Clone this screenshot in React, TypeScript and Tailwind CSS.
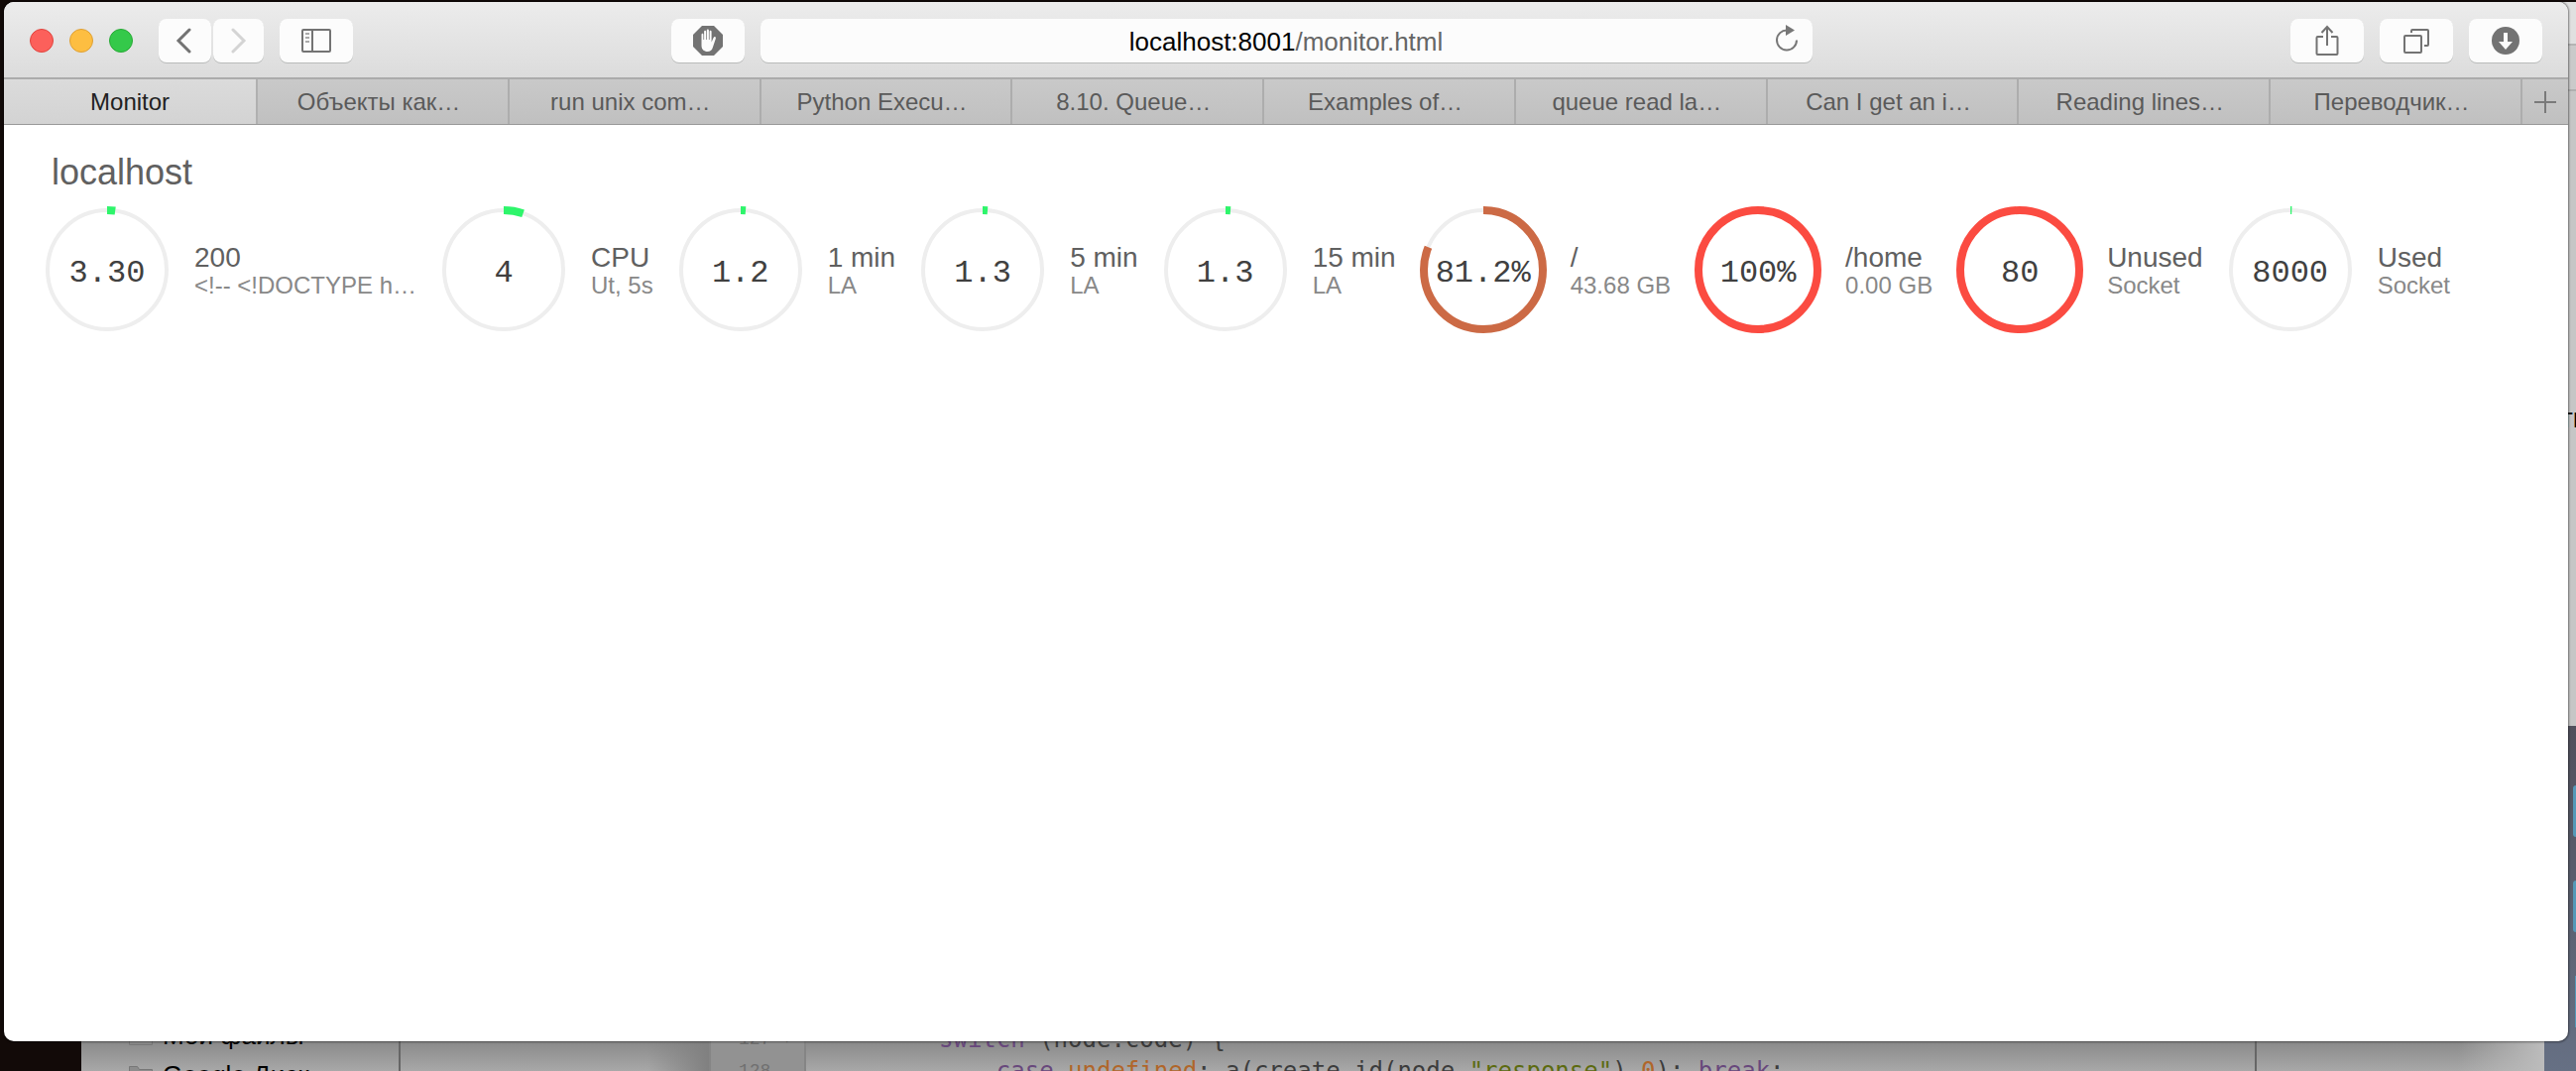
import React from "react";

const GREEN = "#2ef56b";
const ORANGE = "#cc6a45";
const RED = "#fb4b41";

type Metric = { value: string; title: string; detail: string; share: number; color: string };

const metrics: Metric[] = [
  { value: "3.30", title: "200", detail: "<!-- <!DOCTYPE h…", share: 0.022, color: GREEN },
  { value: "4", title: "CPU", detail: "Ut, 5s", share: 0.053, color: GREEN },
  { value: "1.2", title: "1 min", detail: "LA", share: 0.0135, color: GREEN },
  { value: "1.3", title: "5 min", detail: "LA", share: 0.0135, color: GREEN },
  { value: "1.3", title: "15 min", detail: "LA", share: 0.0135, color: GREEN },
  { value: "81.2%", title: "/", detail: "43.68 GB", share: 0.812, color: ORANGE },
  { value: "100%", title: "/home", detail: "0.00 GB", share: 1, color: RED },
  { value: "80", title: "Unused", detail: "Socket", share: 1, color: RED },
  { value: "8000", title: "Used", detail: "Socket", share: 0.0036, color: GREEN },
];

const tabs = [
  "Monitor",
  "Объекты как…",
  "run unix com…",
  "Python Execu…",
  "8.10. Queue…",
  "Examples of…",
  "queue read la…",
  "Can I get an i…",
  "Reading lines…",
  "Переводчик…",
];

const toolButton =
  "flex h-11 shrink-0 items-center justify-center rounded-lg bg-[#fcfcfc] shadow-[0_1px_0_#b9bbba] text-[#737373]";

function Gauge({ metric }: { metric: Metric }) {
  return (
    <li className="flex shrink-0 items-center gap-6">
      <div className="relative size-32">
        <svg viewBox="0 0 128 128" className="size-32" fill="none" aria-hidden="true">
          <circle cx="64" cy="64" r="60" stroke="#eeeeee" strokeWidth="4" />
          <circle
            cx="64"
            cy="64"
            r="60"
            stroke={metric.color}
            strokeWidth="8"
            pathLength={1}
            strokeDasharray={metric.share === 1 ? undefined : `${metric.share} 1`}
            transform="rotate(-90 64 64)"
          />
        </svg>
        <span className="absolute inset-0 flex items-center justify-center pt-2 font-['Liberation_Mono',monospace] text-[32px] leading-none text-[#404040]">
          {metric.value}
        </span>
      </div>
      <div className="max-w-56 whitespace-nowrap">
        <div className="text-[28px] leading-8 text-[#606060]">{metric.title}</div>
        <div className="text-[24px] leading-6 text-[#888888]">{metric.detail}</div>
      </div>
    </li>
  );
}

function AddressField() {
  return (
    <div className="relative w-full max-w-[1061px]">
      <label htmlFor="address" className="sr-only">
        Address
      </label>
      <input
        id="address"
        defaultValue="localhost:8001/monitor.html"
        className="h-11 w-full rounded-lg bg-[#fcfcfc] text-center text-[26px] text-transparent shadow-[0_1px_0_#b9bbba] outline-none"
      />
      <div
        aria-hidden="true"
        className="pointer-events-none absolute inset-0 flex items-center justify-center rounded-lg pt-0.5 text-[26px] leading-none text-black"
      >
        <span>localhost:8001</span>
        <span className="text-[#666666]">/monitor.html</span>
      </div>
      <button aria-label="Reload" className="absolute inset-y-0 right-3.5 flex items-center pb-1 text-[#777777]">
        <svg width="24" height="28" viewBox="0 0 24 28" fill="none">
          <path d="M12.500 5.500a10 10 0 1 0 9.500 10" stroke="currentColor" strokeWidth="2" />
          <path d="M11 0v11l9-5.500z" fill="currentColor" />
        </svg>
      </button>
    </div>
  );
}

function Toolbar() {
  return (
    <header className="flex h-19 items-center gap-4 bg-linear-to-b from-[#ececec] to-[#dcdcdc] px-[26px] pt-px">
      <div className="flex flex-1 items-center">
        <div className="flex gap-4">
          <button aria-label="Close" className="size-6 rounded-full border border-[#e0443e] bg-[#fc605b]" />
          <button aria-label="Minimize" className="size-6 rounded-full border border-[#dea034] bg-[#fdbe41]" />
          <button aria-label="Zoom" className="size-6 rounded-full border border-[#27a934] bg-[#34c94a]" />
        </div>
        <div className="ml-[26px] flex gap-0.5">
          <button aria-label="Back" className={`${toolButton} w-[53px] pr-1`}>
            <svg width="16" height="26" viewBox="0 0 16 26" fill="none" stroke="currentColor" strokeWidth="3">
              <path d="M14 2 3 13l11 11" strokeLinecap="round" />
            </svg>
          </button>
          <button aria-label="Forward" disabled className={`${toolButton} w-[51px]`}>
            <svg width="16" height="26" viewBox="0 0 16 26" fill="none" stroke="#d4d4d4" strokeWidth="3">
              <path d="m2 2 11 11L2 24" strokeLinecap="round" />
            </svg>
          </button>
        </div>
        <button aria-label="Show sidebar" className={`${toolButton} ml-4 w-[74px]`}>
          <svg width="30" height="24" viewBox="0 0 30 24" fill="none" stroke="currentColor">
            <rect x="1" y="1" width="28" height="22" rx="1" strokeWidth="2" />
            <path d="M11 1v22" strokeWidth="2" />
            <path d="M4 5h4M4 9h4M4 13h4" strokeWidth="1.5" opacity=".8" />
          </svg>
        </button>
        <button aria-label="Ad blocker" className={`${toolButton} ml-auto w-[74px]`}>
          <svg width="30" height="30" viewBox="0 0 30 30">
            <path d="M9 0h12l9 9v12l-9 9H9l-9-9V9z" fill="currentColor" />
            <path
              d="M8.500 9c0-1.700 1.900-1.700 1.900 0v5h.7V6c0-1.800 2-1.800 2 0v8h.7V4.800c0-1.800 2.100-1.800 2.100 0V14h.7V6c0-1.800 2-1.800 2 0v10.500l2-4.500c.8-1.700 2.900-.9 2.200.9l-3 9c-.7 2.400-2.600 4-5.200 4-3.700 0-6.100-2.200-6.100-6z"
              fill="#fcfcfc"
            />
          </svg>
        </button>
      </div>
      <AddressField />
      <div className="flex flex-1 justify-end gap-4">
        <button aria-label="Share" className={`${toolButton} w-[74px]`}>
          <svg width="24" height="32" viewBox="0 0 24 32" fill="none" stroke="currentColor" strokeWidth="2">
            <path d="M8 12H2.500a1 1 0 0 0-1 1v16a1 1 0 0 0 1 1h19a1 1 0 0 0 1-1V13a1 1 0 0 0-1-1H16" />
            <path d="M12 21V2M6.500 8 12 2l5.500 6" />
          </svg>
        </button>
        <button aria-label="Show all tabs" className={`${toolButton} w-[74px]`}>
          <svg width="26" height="26" viewBox="0 0 26 26" fill="none" stroke="currentColor" strokeWidth="2">
            <rect x="1" y="8" width="17" height="17" rx="1" />
            <path d="M8 5V3a1 1 0 0 1 1-1h15a1 1 0 0 1 1 1v14a1 1 0 0 1-1 1h-3" />
          </svg>
        </button>
        <button aria-label="Downloads" className={`${toolButton} w-[74px]`}>
          <svg width="28" height="28" viewBox="0 0 28 28">
            <circle cx="14" cy="14" r="14" fill="currentColor" />
            <path d="M12 6h4v9h5l-7 8-7-8h5z" fill="#fcfcfc" />
          </svg>
        </button>
      </div>
    </header>
  );
}

function TabBar() {
  return (
    <nav
      aria-label="Tabs"
      className="flex h-12 border-t-2 border-b border-t-[#ababab] border-b-[#999999] bg-linear-to-b from-[#c9c9c9] to-[#c0c0c0] text-[24px] text-[#5a5a5a]"
    >
      {tabs.map((tab, i) => (
        <button
          key={tab}
          aria-current={i === 0 ? "page" : undefined}
          className={
            i === 0
              ? "flex-[1.01] truncate border-r-2 border-[#b0b0b0] bg-linear-to-b from-[#dbdbdb] to-[#d3d3d3] px-1 text-[#222222]"
              : "flex-1 truncate border-r-2 border-[#adadad] pr-2"
          }
        >
          {tab}
        </button>
      ))}
      <button aria-label="New tab" className="flex w-[46px] items-center justify-center text-[#7a7a7a]">
        <svg width="22" height="22" viewBox="0 0 22 22" stroke="currentColor" strokeWidth="2">
          <path d="M11 0v22M0 11h22" />
        </svg>
      </button>
    </nav>
  );
}

function Folder() {
  return (
    <svg width="24" height="20" viewBox="0 0 24 20" fill="#8c8c8c" stroke="#777777">
      <path d="M.5 1.500h8l2 3h13v15H.5z" />
      <path d="M.5 7.500h23" />
    </svg>
  );
}

/* The editor window whose last lines show below the browser. */
function EditorBehind() {
  return (
    <div className="absolute right-8 bottom-0 left-[82px] flex h-14 overflow-hidden bg-linear-to-b from-[#868686] from-40% to-[#a8a8a8]">
      <div className="w-[322px] shrink-0 border-r-2 border-[#666666] pl-12 text-[26px] leading-10 text-black">
        <div className="flex items-center gap-2.5">
          <Folder /> Мои файлы
        </div>
        <div className="flex items-center gap-2.5">
          <Folder /> Google Диск
        </div>
      </div>
      <div className="w-[311px] shrink-0 bg-linear-to-r from-transparent from-80% to-[#808080]" />
      <div className="flex w-[98px] shrink-0 flex-col border-x-2 border-[#858585] bg-[#929292] pt-2 pl-7 font-['Liberation_Mono',monospace] text-[18px] leading-8 text-[#707070]">
        <span className="shrink-0">127 ▾</span>
        <span className="shrink-0">128</span>
      </div>
      <pre className="flex-1 pt-2 pl-[134px] font-['DejaVu_Sans_Mono',monospace] text-[24px] leading-8 text-[#3c3c3c]">
        <span className="text-[#68487c]">switch</span>
        {" (node.code) {\n    "}
        <span className="text-[#68487c]">case</span> <span className="text-[#b0662a]">undefined</span>
        {": a(create_id(node,"}
        <span className="text-[#5c6a10]">"response"</span>
        {"),"}
        <span className="text-[#b0662a]">0</span>
        {"); "}
        <span className="text-[#68487c]">break</span>;
      </pre>
      <div className="w-[292px] shrink-0 border-l-2 border-[#666666] bg-linear-to-r from-transparent from-70% to-[#bcbcbc]" />
    </div>
  );
}

/* Desktop and a second window that show past the browser's right edge. */
function DesktopBehind() {
  return (
    <div className="absolute top-0.5 right-0 bottom-0 flex w-8 flex-col">
      <div className="h-11 border-b-2 border-[#b4b4b4] bg-[#e0e0e0]" />
      <div className="h-[46px] border-b-2 border-[#b0b0b0] bg-[#cacaca]" />
      <div className="h-160 overflow-hidden bg-[#c6c6c6] pt-78 pl-4 text-[28px] leading-9 text-black">ть</div>
      <div className="flex flex-1 flex-col items-end gap-11 bg-linear-to-b from-[#50505c] to-[#667084] pt-15">
        <div className="h-13 w-[3px] rounded-l-sm bg-[#5599b8]" />
        <div className="h-13 w-[3px] rounded-l-sm bg-[#5599b8]" />
        <div className="h-13 w-px bg-[#5599b8]" />
      </div>
    </div>
  );
}

export default function App() {
  return (
    <div className="relative flex h-screen flex-col overflow-hidden bg-[#120a08] font-['Liberation_Sans',Arial,sans-serif]">
      <DesktopBehind />
      <EditorBehind />
      <div className="relative mt-0.5 mr-2 mb-[30px] ml-1 flex flex-1 flex-col overflow-hidden rounded-[10px] bg-white shadow-[0_0_2px_1px_rgba(0,0,0,0.45)]">
        <Toolbar />
        <TabBar />
        <main className="flex-1 pt-6 pl-10">
          <h1 className="pl-2 text-[36px] leading-12 text-[#606060]">localhost</h1>
          <ul className="mt-2.5 flex gap-6">
            {metrics.map((metric, i) => (
              <Gauge key={i} metric={metric} />
            ))}
          </ul>
        </main>
      </div>
    </div>
  );
}
